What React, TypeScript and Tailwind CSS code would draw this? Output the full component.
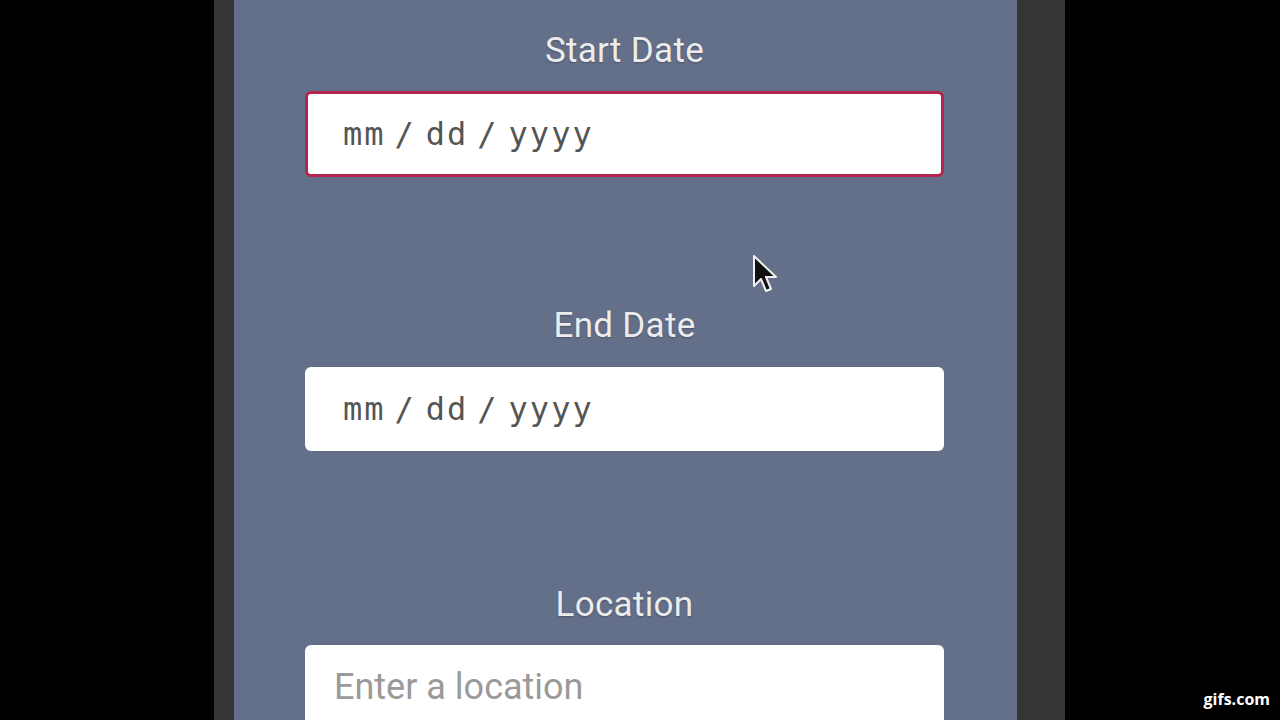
import React from 'react';

const Label: React.FC<{ text: string; className?: string }> = ({ text, className = '' }) => (
  <div
    className={`h-10 shrink-0 flex items-center justify-center text-[35px] tracking-[0.3px] text-[#ececec] [text-shadow:0_1px_2px_rgba(0,0,0,0.25)] ${className}`}
    style={{ fontFamily: 'Roboto, "Noto Sans", sans-serif' }}
  >
    {text}
  </div>
);

const DateBox: React.FC<{ focused?: boolean; className?: string }> = ({ focused, className = '' }) => (
  <div
    className={`w-full shrink-0 bg-white rounded-[6px] flex items-center text-[32px] tracking-[2px] text-[#555] ${
      focused ? 'h-[86px] border-[3px] border-[#b3254c] pl-[35px]' : 'h-[84px] pl-[38px]'
    } ${className}`}
    style={{ fontFamily: '"DejaVu Sans Mono", monospace' }}
  >
    <span>mm</span>
    <span className="ml-[9px]">/</span>
    <span className="ml-[10px]">dd</span>
    <span className="ml-[9px]">/</span>
    <span className="ml-[10px]">yyyy</span>
  </div>
);

export default function App() {
  return (
    <div className="w-[1280px] h-[720px] bg-black flex overflow-hidden relative">
      <div className="w-[214px] shrink-0 bg-black" />
      <div className="w-[20px] shrink-0 bg-[#363636]" />

      {/* form panel */}
      <div className="w-[783px] shrink-0 bg-[#646f89] pl-[71px] pr-[73px] pt-[31px] flex flex-col">
        <Label text="Start Date" />
        <DateBox focused className="mt-[20px]" />

        <Label text="End Date" className="mt-[129px]" />
        <DateBox className="mt-[21px]" />

        <Label text="Location" className="mt-[134px]" />
        <div
          className="mt-[20px] h-[84px] w-full shrink-0 bg-white rounded-[6px] flex items-center pl-[29px] text-[36px] text-[#9a9a9a]"
          style={{ fontFamily: 'Roboto, "Noto Sans", sans-serif' }}
        >
          Enter a location
        </div>
      </div>

      <div className="w-[48px] shrink-0 bg-[#353535]" />
      <div className="flex-1 bg-black" />

      {/* mouse pointer */}
      <svg className="absolute left-[752px] top-[254px]" width="28" height="40" viewBox="0 0 28 40">
        <path
          d="M2 2 L2 32 L9 25 L14 37 L19 35 L14 23 L24 23 Z"
          fill="#111"
          stroke="#f2f2f2"
          strokeWidth="2"
          strokeLinejoin="round"
        />
      </svg>

      {/* watermark */}
      <div
        className="absolute right-[10px] bottom-[9px] text-white text-[16px] font-bold"
        style={{ fontFamily: '"Open Sans", "Noto Sans", sans-serif' }}
      >
        gifs.com
      </div>
    </div>
  );
}
